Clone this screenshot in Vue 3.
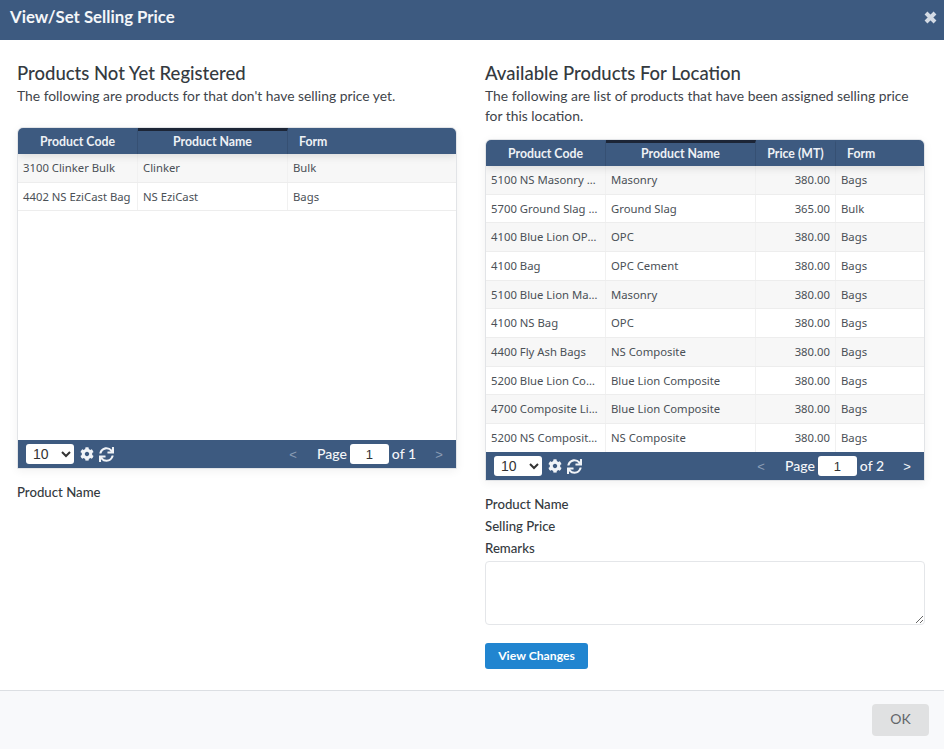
<script setup>
const cog = "M487.4 315.7l-42.6-24.6c4.3-23.2 4.3-47 0-70.2l42.6-24.6c4.9-2.8 7.1-8.6 5.5-14-11.1-35.6-30-67.8-54.7-94.6-3.8-4.1-10-5.1-14.8-2.3L380.8 110c-17.9-15.4-38.5-27.3-60.8-35.1V25.8c0-5.6-3.9-10.5-9.4-11.7-36.7-8.2-74.3-7.8-109.2 0-5.5 1.2-9.4 6.1-9.4 11.7V75c-22.2 7.9-42.8 19.8-60.8 35.1L88.7 85.5c-4.9-2.8-11-1.9-14.8 2.3-24.7 26.7-43.6 58.9-54.7 94.6-1.7 5.4.6 11.2 5.5 14L67.3 221c-4.3 23.2-4.3 47 0 70.2l-42.6 24.6c-4.9 2.8-7.1 8.6-5.5 14 11.1 35.6 30 67.8 54.7 94.6 3.8 4.1 10 5.1 14.8 2.3l42.6-24.6c17.9 15.4 38.5 27.3 60.8 35.1v49.2c0 5.6 3.9 10.5 9.4 11.7 36.7 8.2 74.3 7.8 109.2 0 5.5-1.2 9.4-6.1 9.4-11.7v-49.2c22.2-7.9 42.8-19.8 60.8-35.1l42.6 24.6c4.9 2.8 11 1.9 14.8-2.3 24.7-26.7 43.6-58.9 54.7-94.6 1.5-5.5-.7-11.3-5.6-14.1zM256 336c-44.1 0-80-35.9-80-80s35.9-80 80-80 80 35.9 80 80-35.9 80-80 80z";
const sync = "M440.65 12.57l4 82.77A247.16 247.16 0 0 0 255.83 8C134.73 8 33.91 94.92 12.29 209.82A12 12 0 0 0 24.09 224h49.05a12 12 0 0 0 11.67-9.26 175.91 175.91 0 0 1 317-56.94l-101.46-4.86a12 12 0 0 0-12.57 12v47.41a12 12 0 0 0 12 12H500a12 12 0 0 0 12-12V12a12 12 0 0 0-12-12h-47.37a12 12 0 0 0-11.98 12.57zM255.83 432a175.61 175.61 0 0 1-146-77.8l101.8 4.87a12 12 0 0 0 12.57-12v-47.4a12 12 0 0 0-12-12H12a12 12 0 0 0-12 12V500a12 12 0 0 0 12 12h47.35a12 12 0 0 0 12-12.6l-4.15-82.57A247.17 247.17 0 0 0 255.83 504c121.11 0 221.93-86.92 243.55-201.82a12 12 0 0 0-11.8-14.18h-49.05a12 12 0 0 0-11.67 9.26A175.86 175.86 0 0 1 255.83 432z";

const leftCols = [
  { label: 'Product Code', w: 120 },
  { label: 'Product Name', w: 150, sorted: true },
  { label: 'Form', w: 168, left: true },
];
const rightCols = [
  { label: 'Product Code', w: 120 },
  { label: 'Product Name', w: 150, sorted: true },
  { label: 'Price (MT)', w: 80 },
  { label: 'Form', w: 88, left: true },
];
const leftRows = [
  ['3100 Clinker Bulk', 'Clinker', 'Bulk'],
  ['4402 NS EziCast Bag', 'NS EziCast', 'Bags'],
];
const rightRows = [
  ['5100 NS Masonry Bag', 'Masonry', '380.00', 'Bags'],
  ['5700 Ground Slag Bulk', 'Ground Slag', '365.00', 'Bulk'],
  ['4100 Blue Lion OPC Bag', 'OPC', '380.00', 'Bags'],
  ['4100 Bag', 'OPC Cement', '380.00', 'Bags'],
  ['5100 Blue Lion Masonry', 'Masonry', '380.00', 'Bags'],
  ['4100 NS Bag', 'OPC', '380.00', 'Bags'],
  ['4400 Fly Ash Bags', 'NS Composite', '380.00', 'Bags'],
  ['5200 Blue Lion Composite', 'Blue Lion Composite', '380.00', 'Bags'],
  ['4700 Composite Lion Bag', 'Blue Lion Composite', '380.00', 'Bags'],
  ['5200 NS Composite Bag', 'NS Composite', '380.00', 'Bags'],
];
const grids = [
  {
    key: 'left',
    title: 'Products Not Yet Registered',
    desc: "The following are products for that don't have selling price yet.",
    cols: leftCols,
    rows: leftRows,
    total: 1,
    fields: ['Product Name'],
  },
  {
    key: 'right',
    title: 'Available Products For Location',
    desc: 'The following are list of products that have been assigned selling price for this location.',
    cols: rightCols,
    rows: rightRows,
    total: 2,
    fields: ['Product Name', 'Selling Price', 'Remarks'],
    form: true,
  },
];
</script>

<template>
  <div class="modal">
    <header class="top">
      <h1>View/Set Selling Price</h1>
      <svg class="close" viewBox="0 0 15 15" aria-label="Close">
        <path d="M3 3 12 12M12 3 3 12" />
      </svg>
    </header>

    <main class="body">
      <section v-for="g in grids" :key="g.key" class="col" :class="g.key">
        <h2>{{ g.title }}</h2>
        <p class="desc">{{ g.desc }}</p>

        <div class="grid">
          <div class="ghead">
            <div
              v-for="c in g.cols"
              :key="c.label"
              class="th"
              :class="{ sorted: c.sorted, thleft: c.left }"
              :style="{ width: c.w + 'px' }"
            >{{ c.label }}</div>
          </div>
          <div class="gbody">
            <div v-for="(r, i) in g.rows" :key="i" class="tr" :class="{ odd: i % 2 === 0 }">
              <div
                v-for="(v, j) in r"
                :key="j"
                class="td"
                :class="{ num: g.cols[j].label.startsWith('Price') }"
                :style="{ width: g.cols[j].w + 'px' }"
              >{{ v }}</div>
            </div>
          </div>
          <div class="pager">
            <select class="size"><option>10</option></select>
            <svg class="ico cog" viewBox="0 0 512 512"><path :d="cog" /></svg>
            <svg class="ico sync" viewBox="0 0 512 512"><path :d="sync" /></svg>
            <div class="nav">
              <span class="arrow dim">&lt;</span>
              <span class="pg">Page</span>
              <input class="pinput" value="1" />
              <span class="pg">of {{ g.total }}</span>
              <span class="arrow" :class="{ dim: g.total === 1 }">&gt;</span>
            </div>
          </div>
        </div>

        <div class="fields">
          <label v-for="f in g.fields" :key="f">{{ f }}</label>
        </div>
        <template v-if="g.form">
          <textarea class="remarks"></textarea>
          <button class="primary">View Changes</button>
        </template>
      </section>
    </main>

    <footer class="bottom">
      <button class="ok">OK</button>
    </footer>
  </div>
</template>

<style scoped>
.modal {
  width: 944px;
  height: 749px;
  display: flex;
  flex-direction: column;
  background: #fff;
  font-family: Lato, "Liberation Sans", sans-serif;
  color: #343a40;
  overflow: hidden;
}
.top {
  height: 40px;
  flex: none;
  background: #3d5a80;
  display: flex;
  align-items: center;
  justify-content: space-between;
  padding: 0 6px 0 10px;
}
.top h1 {
  margin: 0 0 8px;
  font-size: 16.8px;
  font-weight: 700;
  color: #f4f6f9;
}
.close {
  width: 15px;
  height: 15px;
  margin-top: -6px;
}
.close path {
  stroke: #d3dae4;
  stroke-width: 4;
  fill: none;
}
.body {
  flex: 1;
  display: flex;
  gap: 28px;
  padding: 22px 19px 0 17px;
  min-height: 0;
}
.col {
  width: 440px;
  display: flex;
  flex-direction: column;
  align-items: flex-start;
}
h2 {
  margin: 0;
  font-size: 18.5px;
  line-height: 23px;
  font-weight: 500;
  color: #343a40;
}
.desc {
  margin: 1px 0 0;
  font-size: 13.85px;
  line-height: 20px;
  width: 430px;
  color: #3f454b;
}
.left .desc { margin-bottom: 21px; }
.right .desc { margin-bottom: 13px; }
.grid {
  width: 440px;
  height: 342px;
  flex: none;
  border: 1px solid #e2e4e7;
  border-radius: 6px 6px 0 0;
  box-sizing: border-box;
  box-shadow: 0 2px 10px rgba(0, 0, 0, 0.06);
  display: flex;
  flex-direction: column;
  overflow: hidden;
}
.ghead {
  height: 26px;
  flex: none;
  display: flex;
  background: #3d5a80;
  box-shadow: 0 2px 8px rgba(0, 0, 0, 0.12);
  position: relative;
  z-index: 1;
}
.th {
  box-sizing: border-box;
  font-size: 12.3px;
  font-weight: 700;
  color: #eef1f5;
  text-align: center;
  border-right: 1px solid #365073;
  border-top: 3px solid transparent;
  line-height: 21px;
}
.th:last-child { border-right: 0; }
.th.sorted { border-top-color: #1c2536; }
.th.thleft { text-align: left; padding-left: 11px; }
.gbody {
  flex: 1;
  min-height: 0;
}
.tr {
  display: flex;
  height: 28.67px;
  border-bottom: 1px solid #ededed;
  box-sizing: border-box;
}
.tr.odd { background: #f7f7f7; }
.td {
  box-sizing: border-box;
  font-family: "Noto Sans", sans-serif;
  font-size: 11.3px;
  line-height: 27px;
  color: #4a5056;
  padding: 0 5px;
  border-right: 1px solid #f1f1f1;
  white-space: nowrap;
  overflow: hidden;
  text-overflow: ellipsis;
}
.td:last-child { border-right: 0; }
.td.num { text-align: right; }
.pager {
  height: 28px;
  flex: none;
  background: #3d5a80;
  display: flex;
  align-items: center;
  padding: 0 8px;
}
.size {
  width: 48px;
  height: 20px;
  border: 0;
  border-radius: 3px;
  background-color: #fff;
  font-family: "Liberation Sans", sans-serif;
  font-size: 14px;
  color: #333;
  padding: 0 0 0 3px;
}
.ico { fill: #f0f3f7; }
.cog { width: 14px; height: 14px; margin-left: 6px; }
.sync { width: 15px; height: 15px; margin-left: 5px; }
.nav {
  margin-left: auto;
  display: flex;
  align-items: center;
  font-size: 14px;
  font-weight: 500;
  color: #f4f6f9;
}
.arrow { width: 10px; text-align: center; font-family: "Liberation Sans", sans-serif; font-size: 13px; }
.arrow.dim { color: #8b9db5; }
.pg { line-height: 20px; }
.nav .arrow:first-child { margin-right: 19px; }
.nav .arrow:last-child { margin-left: 18px; margin-right: 4px; }
.pinput {
  width: 39px;
  height: 20px;
  box-sizing: border-box;
  border: 0;
  border-radius: 3px;
  margin: 0 3px;
  text-align: center;
  font-family: "Liberation Sans", sans-serif;
  font-size: 13px;
  color: #333;
  padding: 0;
}
.fields {
  display: flex;
  flex-direction: column;
  margin-top: 12px;
}
.fields label {
  font-size: 13.2px;
  line-height: 22px;
  font-weight: 500;
  color: #343a40;
}
.remarks {
  display: block;
  width: 440px;
  height: 64px;
  box-sizing: border-box;
  margin-top: 2px;
  border: 1px solid #e4e6e9;
  border-radius: 4px;
  background: #fff;
  resize: both;
}
.primary {
  margin-top: 18px;
  width: 103px;
  height: 26px;
  border: 0;
  border-radius: 3px;
  background: #2185d0;
  color: #fff;
  font-family: Lato, sans-serif;
  font-size: 12.2px;
  font-weight: 700;
  padding: 0 0 1px;
}
.bottom {
  height: 59px;
  flex: none;
  box-sizing: border-box;
  border-top: 1px solid #dcdfe3;
  background: #f8f9fb;
  display: flex;
  justify-content: flex-end;
  align-items: center;
  padding: 0 15px 0 0;
}
.ok {
  width: 57px;
  height: 32px;
  border: 0;
  border-radius: 4px;
  background: #e0e1e2;
  color: #63666a;
  font-family: Lato, sans-serif;
  font-size: 14px;
  padding: 0 0 4px;
}
</style>
